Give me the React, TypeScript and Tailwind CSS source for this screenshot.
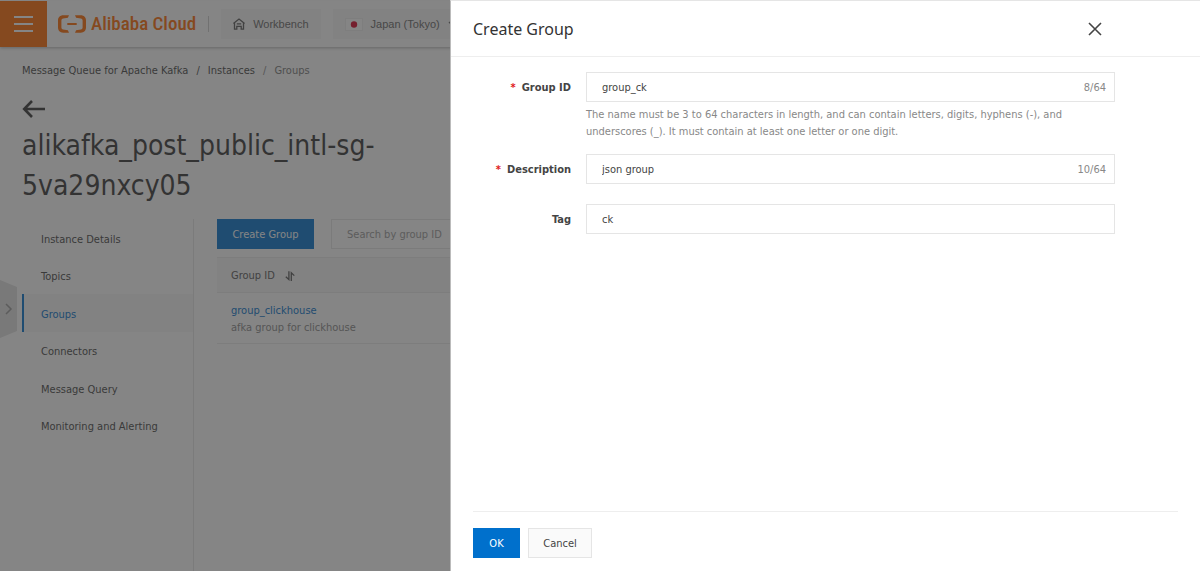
import { useState } from "react";

const navItems = [
  "Instance Details",
  "Topics",
  "Groups",
  "Connectors",
  "Message Query",
  "Monitoring and Alerting",
];

function LogoMark() {
  return (
    <svg width="28" height="18" viewBox="0 0 28 18" aria-hidden="true">
      <path
        fill="#ff6a00"
        d="M11 .3H5.200C2 .3 0 2.400 0 5.400v7.200c0 3 2 5.100 5.200 5.100H11l-1.100-2.400-4.800-.8c-1.100-.2-1.700-.9-1.700-1.900V5.400c0-1 .6-1.700 1.700-1.900l4.800-.8zM17 .3h5.800C26 .3 28 2.400 28 5.400v7.200c0 3-2 5.100-5.200 5.100H17l1.100-2.400 4.800-.8c1.100-.2 1.700-.9 1.700-1.900V5.400c0-1-.6-1.700-1.700-1.900l-4.800-.8zM9.300 8h9.400v2H9.300z"
      />
    </svg>
  );
}

function TopBar() {
  return (
    <header className="flex h-[47px] items-center border-t border-[#fdfdfd] bg-white whitespace-nowrap shadow-[0_1px_3px_rgba(0,0,0,0.3)]">
      <button aria-label="Menu" className="flex h-full w-[47px] shrink-0 items-center justify-center bg-[#ff6a00]">
        <svg width="19" height="16" viewBox="0 0 19 16" stroke="#fff" strokeWidth="1.8" aria-hidden="true">
          <path d="M0 1h19M0 8h19M0 15h19" />
        </svg>
      </button>
      <a href="#home" className="ml-[11px] flex items-center gap-[5px] text-[19px] leading-6 font-medium text-[#ff6a00]">
        <LogoMark />
        <span className="font-['Roboto_Condensed',Roboto,sans-serif]">Alibaba Cloud</span>
      </a>
      <span className="ml-3 h-4 w-px bg-[#ccc]" />
      <div className="ml-3 flex gap-3 font-['Liberation_Sans',sans-serif] text-[11px] text-[#666]">
        <button className="flex h-[30px] items-center gap-2 bg-[#f7f7f7] px-3">
          <svg width="12" height="12" viewBox="0 0 12 12" fill="none" stroke="#555" strokeWidth="1.3" aria-hidden="true">
            <path d="M.4 5.400 6 1l5.600 4.400M1.500 5.200v6h2.300V8.400h4.400v2.800h2.300v-6M3.800 5.900h4.400" />
          </svg>
          Workbench
        </button>
        <button className="flex h-[30px] items-center gap-2 bg-[#f7f7f7] px-3">
          <svg width="18" height="13" viewBox="0 0 18 13" aria-hidden="true">
            <rect x=".5" y=".5" width="17" height="12" fill="#fff" stroke="#eee" />
            <circle cx="9" cy="6.5" r="3.2" fill="#d80027" />
          </svg>
          Japan (Tokyo)
          <svg width="8" height="6" viewBox="0 0 8 6" fill="none" stroke="#666" strokeWidth="1.3" aria-hidden="true">
            <path d="m1 1 3 3 3-3" />
          </svg>
        </button>
      </div>
    </header>
  );
}

function ConsolePage() {
  return (
    <div className="flex min-h-screen flex-col bg-white">
      <TopBar />
      <nav aria-label="Breadcrumb" className="mt-4 flex h-4 items-center gap-2 pl-[22px]">
        <a href="#kafka">Message Queue for Apache Kafka</a>
        <span>/</span>
        <a href="#instances">Instances</a>
        <span className="text-[#888]">/</span>
        <span className="text-[#777]">Groups</span>
      </nav>
      <div className="w-[37.5%] pl-[22px]">
        <a href="#back" aria-label="Back" className="mt-[21px] block h-[18px] w-6">
          <svg width="24" height="18" viewBox="0 0 24 18" fill="none" stroke="#333" strokeWidth="2.6" aria-hidden="true">
            <path d="M23 9H2.5M10 1 2.2 9l7.8 8" />
          </svg>
        </a>
        <h1 className="mt-2 text-[28px] leading-10 text-[#333]">
          alikafka_post_public_intl-sg-
          <wbr />
          5va29nxcy05
        </h1>
      </div>
      <div className="mt-[13px] flex grow pl-[22px]">
        <nav aria-label="Instance" className="w-[172px] shrink-0 border-r border-[#e5e5e5]">
          <ul className="grid h-[225px] grid-rows-6">
            {navItems.map((item) => (
              <li key={item} className="flex">
                <a
                  href="#section"
                  className={
                    item === "Groups"
                      ? "flex grow items-center border-l-2 border-[#0070cc] bg-[#f7f7f7] pt-1 pl-[17px] text-[#0070cc]"
                      : "flex grow items-center pt-1 pl-[19px]"
                  }
                >
                  {item}
                </a>
              </li>
            ))}
          </ul>
        </nav>
        <main className="min-w-0 grow pr-6 pl-[23px]">
          <div className="flex gap-[17px]">
            <button className="h-[30px] w-[97px] bg-[#0070cc] pt-0.5 text-white">Create Group</button>
            <input
              aria-label="Search by group ID"
              placeholder="Search by group ID"
              className="h-[30px] w-[240px] border border-[#e5e5e5] px-[15px] placeholder:text-[#999]"
            />
          </div>
          <table className="mt-2 w-full border-y border-[#ebebeb] text-left">
            <thead>
              <tr className="h-[35px] border-b border-[#ebebeb] bg-[#f7f7f7]">
                <th className="pt-0.5 pl-3.5 font-normal">
                  <span className="flex items-center gap-2.5 text-[#555]">
                    Group ID
                    <svg width="10" height="11" viewBox="0 0 10 11" fill="none" stroke="#555" strokeWidth="1.3" aria-hidden="true">
                      <path d="M3.900 .2v8.300L.8 5.800M6.300 10v-8.300l3 2.900" />
                    </svg>
                  </span>
                </th>
              </tr>
            </thead>
            <tbody>
              <tr className="h-[51px]">
                <td className="pt-0.5 pl-3.5 leading-[17px]">
                  <a href="#group" className="block text-[#0070cc]">
                    group_clickhouse
                  </a>
                  <span className="text-[#888]">afka group for clickhouse</span>
                </td>
              </tr>
            </tbody>
          </table>
        </main>
      </div>
      <button aria-label="Expand sidebar" className="absolute top-[280px] left-0">
        <svg width="17" height="58" viewBox="0 0 17 58" fill="none" aria-hidden="true">
          <path d="M0 0 17 7v44L0 58z" fill="#e0e0e0" />
          <path d="m6 24 5 5-5 5" stroke="#999" strokeWidth="1.5" />
        </svg>
      </button>
    </div>
  );
}

type FieldProps = {
  id: string;
  label: string;
  value: string;
  onChange: (value: string) => void;
  limit?: number;
  hint?: string;
};

function Field({ id, label, value, onChange, limit, hint }: FieldProps) {
  return (
    <div className="flex gap-[15px]">
      <label htmlFor={id} className="flex h-[30px] w-24 shrink-0 items-center justify-end gap-1.5 pt-0.5 font-bold">
        {limit ? <span className="text-[#e02020]">*</span> : null}
        {label}
      </label>
      <div className="grow">
        <div className="flex h-[30px] items-center border border-[#e5e5e5] pt-0.5 pr-2 pl-[15px]">
          <input
            id={id}
            value={value}
            maxLength={limit}
            onChange={(e) => onChange(e.target.value)}
            className="min-w-0 grow outline-none"
          />
          {limit ? (
            <span className="text-[#888]">
              {value.length}/{limit}
            </span>
          ) : null}
        </div>
        {hint ? <p className="-mb-1.5 pt-1 leading-[17px] text-[#888]">{hint}</p> : null}
      </div>
    </div>
  );
}

function CreateGroupDrawer() {
  const [groupId, setGroupId] = useState("group_ck");
  const [description, setDescription] = useState("json group");
  const [tag, setTag] = useState("ck");

  return (
    <section
      role="dialog"
      aria-label="Create Group"
      className="absolute inset-y-0 right-0 flex w-[62.5%] flex-col border-t border-l border-[#e5e5e5] border-l-[#bbb] bg-white"
    >
      <div className="flex h-14 shrink-0 items-center justify-between border-b border-[#eee] pr-[98px] pl-[22px]">
        <h2 className="font-['Noto_Sans',sans-serif] text-base text-[#333]">Create Group</h2>
        <button aria-label="Close">
          <svg width="14" height="14" viewBox="0 0 14 14" stroke="#444" strokeWidth="1.6" aria-hidden="true">
            <path d="m1 1 12 12M13 1 1 13" />
          </svg>
        </button>
      </div>
      <form id="create-group" className="flex grow flex-col gap-5 pt-[15px] pr-[85px] pl-6">
        <Field
          id="group-id"
          label="Group ID"
          value={groupId}
          onChange={setGroupId}
          limit={64}
          hint="The name must be 3 to 64 characters in length, and can contain letters, digits, hyphens (-), and underscores (_). It must contain at least one letter or one digit."
        />
        <Field id="description" label="Description" value={description} onChange={setDescription} limit={64} />
        <Field id="tag" label="Tag" value={tag} onChange={setTag} />
      </form>
      <div className="mr-[22px] ml-[22px] flex gap-2 border-t border-[#eee] pt-4 pb-[13px]">
        <button type="button" className="h-[30px] w-[47px] bg-[#0070cc] pt-0.5 text-white">
          OK
        </button>
        <button type="button" className="h-[30px] w-16 border border-[#e5e5e5] bg-[#fafafa] pt-0.5">
          Cancel
        </button>
      </div>
    </section>
  );
}

export default function App() {
  return (
    <div className="relative min-h-screen overflow-hidden font-['DejaVu_Sans_Condensed','DejaVu_Sans',sans-serif] text-[11px] leading-4 text-[#444]">
      <ConsolePage />
      <div className="absolute inset-0 bg-[#333]/60" />
      <CreateGroupDrawer />
    </div>
  );
}
